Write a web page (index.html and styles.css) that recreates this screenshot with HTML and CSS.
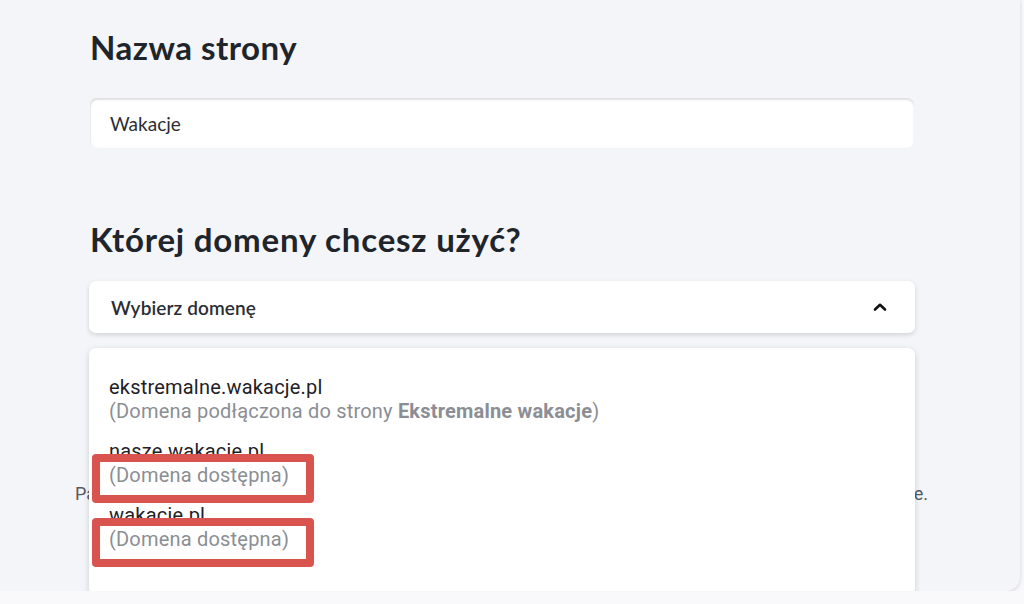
FILE: index.html
```html
<!DOCTYPE html>
<html lang="pl">
<head>
    <meta charset="UTF-8">
    <meta name="viewport" content="width=device-width, initial-scale=1.0">
    <title>Nowa strona</title>
    <link rel="stylesheet" href="styles.css">
</head>
<body>
<div class="panel">

    <!-- Nazwa strony -->
    <h1 class="section-title">Nazwa strony</h1>
    <input type="text" class="text-input" value="Wakacje">

    <!-- Wybor domeny -->
    <h2 class="section-title domain-title">Której domeny chcesz użyć?</h2>
    <div class="select-wrap">
        <div class="select-box">
            <span>Wybierz domenę</span>
            <svg class="chevron" width="14" height="10" viewBox="0 0 14 10">
                <path d="M2 7.5 L7 2.8 L12 7.5" fill="none" stroke="#111" stroke-width="2.6" stroke-linecap="round" stroke-linejoin="round"/>
            </svg>
        </div>

        <ul class="domain-list">
            <li class="domain-item">
                <div class="domain-name">ekstremalne.wakacje.pl</div>
                <div class="domain-status">(Domena podłączona do strony <b>Ekstremalne wakacje</b>)</div>
            </li>
            <li class="domain-item">
                <div class="domain-name">nasze.wakacje.pl</div>
                <div class="domain-status marked">(Domena dostępna)</div>
            </li>
            <li class="domain-item">
                <div class="domain-name">wakacje.pl</div>
                <div class="domain-status marked">(Domena dostępna)</div>
            </li>
        </ul>

        <p class="hint">Pamiętaj, że domenę możesz zmienić w każdej chwili w ustawieniach strony na swoim koncie.</p>
    </div>

</div>
</body>
</html>
```

FILE: styles.css
```css
/* Ogolne */
body {
    font-family: Lato, "Noto Sans", sans-serif;
    margin: 0;
    padding: 0;
    background-color: #f9f9fb;
    color: #20242b;
    overflow: hidden;
}

.panel {
    width: 1040px;
    height: 591px;
    margin-left: -20px;
    padding: 27px 0 0 110px;
    box-sizing: border-box;
    background-color: #f4f5f9;
    border-radius: 0 0 14px 0;
    box-shadow: 0 1px 4px rgba(0, 0, 0, 0.16);
}

.section-title {
    margin: 0;
    font-size: 33px;
    line-height: 40px;
    font-weight: 700;
    letter-spacing: 0.5px;
    color: #20242b;
}

.domain-title {
    margin-top: 71px;
    letter-spacing: 0.8px;
}

/* Pole tekstowe */
.text-input {
    display: block;
    width: 824px;
    height: 50px;
    margin: 31px 0 0 0;
    padding: 0 20px;
    box-sizing: border-box;
    border: none;
    border-radius: 7px;
    background-color: #fff;
    box-shadow: inset 0 2px 2px rgba(0, 0, 0, 0.12), inset 1px 0 2px rgba(0, 0, 0, 0.06);
    font-family: Lato, sans-serif;
    font-size: 19px;
    color: #2a2d33;
    outline: none;
}

/* Lista rozwijana */
.select-wrap {
    position: relative;
    width: 826px;
    margin: 22px 0 0 -1px;
}

.select-box {
    display: flex;
    align-items: center;
    justify-content: space-between;
    height: 52px;
    padding: 0 28px 0 22px;
    background-color: #fff;
    border-radius: 7px;
    box-shadow: 0 2px 5px rgba(0, 0, 0, 0.14);
    font-size: 19px;
    color: #2a2d33;
    letter-spacing: 0.1px;
}

.select-box span {
    font-weight: 600;
}

.domain-list {
    position: absolute;
    top: 67px;
    left: 0;
    right: 0;
    z-index: 2;
    height: 247px;
    margin: 0;
    padding: 27px 20px 0 20px;
    box-sizing: border-box;
    list-style: none;
    background-color: #fff;
    border-radius: 7px;
    box-shadow: 0 2px 6px rgba(0, 0, 0, 0.16);
    font-family: Roboto, sans-serif;
    font-size: 20px;
    line-height: 24px;
    letter-spacing: 0.2px;
}

.domain-item {
    margin-bottom: 16px;
}

.domain-name {
    color: #1f2126;
}

.domain-status {
    color: #8b8e94;
}

.domain-status b {
    font-weight: 700;
}

.marked {
    position: relative;
    display: inline-block;
}

.marked::after {
    content: "";
    position: absolute;
    top: -9px;
    bottom: -16px;
    left: -17px;
    right: -25px;
    border: 8px solid #d9534f;
    border-radius: 4px;
}

/* Tekst pod lista */
.hint {
    margin: 149px 0 0 -14px;
    width: 853px;
    font-family: Roboto, sans-serif;
    font-size: 18px;
    line-height: 24px;
    color: #555a63;
    text-align: justify;
    text-align-last: justify;
}
```
